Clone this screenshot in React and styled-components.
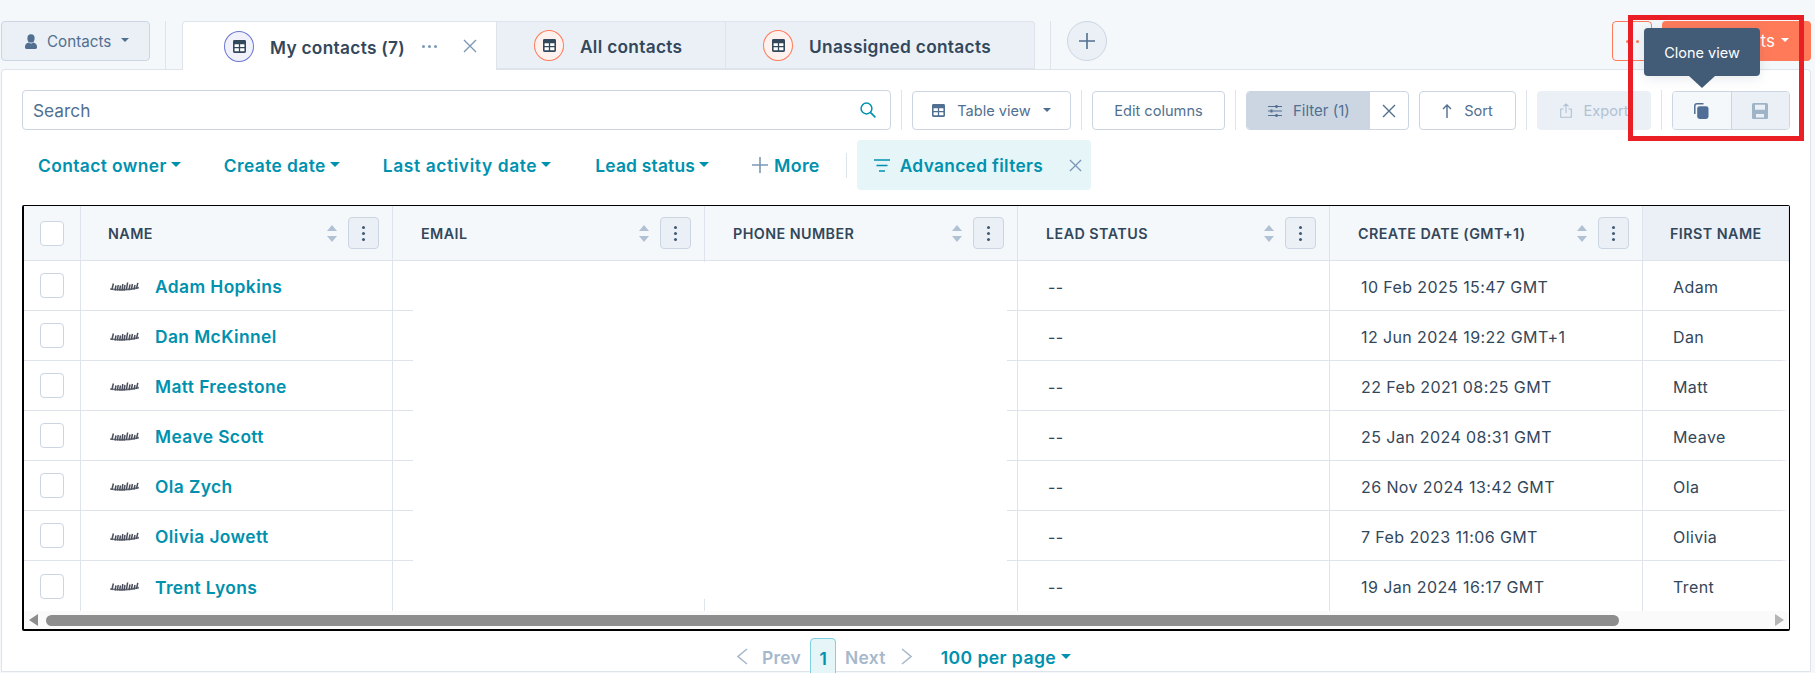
import React from 'react';
import styled, { createGlobalStyle } from 'styled-components';

const Global = createGlobalStyle`
  html, body { margin: 0; padding: 0; background: #f5f8fa; overflow: hidden; }
  body { font-family: Inter, "Noto Sans", "Liberation Sans", sans-serif; color: #33475b; }
  * { box-sizing: border-box; }
`;

const Page = styled.div`
  position: relative;
  width: 1815px;
  height: 673px;
  overflow: hidden;
  background: #f5f8fa;
`;

const TopBar = styled.div`
  display: flex;
  align-items: flex-start;
  height: 70px;
  padding: 21px 4px 0 1px;
`;

const ContactsButton = styled.div`
  display: flex;
  align-items: center;
  width: 149px;
  height: 40px;
  padding-left: 23px;
  gap: 10px;
  background: #eaf0f6;
  border: 1px solid #cbd6e2;
  border-radius: 4px;
  color: #516f90;
  font-size: 15.2px;
`;

const TallSep = styled.div`
  width: 1px;
  height: 49px;
  background: #dfe3eb;
  margin: 0 16px 0 15px;
`;

const Tab = styled.div`
  position: relative;
  z-index: 2;
  display: flex;
  align-items: center;
  height: ${p => (p.$active ? '49px' : '48px')};
  width: ${p => p.$w}px;
  padding-left: ${p => p.$pad}px;
  background: ${p => (p.$active ? '#fff' : '#eaf0f6')};
  border: 1px solid #dfe3eb;
  border-bottom: ${p => (p.$active ? 'none' : '1px solid #dfe3eb')};
  border-left-width: ${p => (p.$first ? '1px' : '0')};
  border-radius: ${p => p.$radius || '0'};
`;

const TabIconCircle = styled.span`
  flex: none;
  display: flex;
  align-items: center;
  justify-content: center;
  width: 30px;
  height: 31px;
  margin-top: 1px;
  border-radius: 50%;
  border: 1px solid ${p => (p.$active ? '#6a78d1' : '#ff7a59')};
  background: ${p => (p.$active ? '#f0f1fa' : '#fff1ee')};
`;

const TabLabel = styled.span`
  margin-left: 16px;
  font-size: 17.3px;
  font-weight: 600;
  letter-spacing: 0.3px;
  white-space: nowrap;
  margin-top: ${p => (p.$active ? '2px' : '3px')};
`;

const TabDots = styled.span`
  display: flex;
  gap: 3px;
  margin-left: ${p => p.$ml}px;
  span {
    width: 3px;
    height: 3px;
    border-radius: 50%;
    background: #7c98b6;
  }
`;

const TabClose = styled.span`
  display: flex;
  margin-left: 26px;
`;

const PlusCircle = styled.div`
  display: flex;
  align-items: center;
  justify-content: center;
  width: 40px;
  height: 40px;
  border-radius: 50%;
  background: #eaf0f6;
  border: 1px solid #cbd6e2;
`;

const Spacer = styled.div`
  flex: 1;
`;

const MoreButton = styled.div`
  display: flex;
  align-items: center;
  justify-content: center;
  gap: 7px;
  width: 40px;
  height: 40px;
  border: 1px solid #ff7a59;
  border-radius: 4px;
  span {
    width: 3px;
    height: 3px;
    border-radius: 50%;
    background: #ff7a59;
  }
`;

const CtaButton = styled.div`
  display: flex;
  align-items: center;
  justify-content: flex-end;
  gap: 6px;
  width: 149px;
  height: 40px;
  margin-left: 10px;
  padding-right: 22px;
  background: #ff7a59;
  border-radius: 4px;
  color: #fff;
  font-size: 17px;
  white-space: nowrap;
`;

const Panel = styled.div`
  position: relative;
  width: 1810px;
  height: 603px;
  margin: -1px 0 0 1px;
  background: #fff;
  border: 1px solid #dfe3eb;
  border-radius: 4px 4px 0 0;
  padding: 20px 0 0 20px;
`;

const Toolbar = styled.div`
  display: flex;
  align-items: flex-end;
  height: 40px;
`;

const SearchBox = styled.div`
  display: flex;
  align-items: center;
  justify-content: space-between;
  flex: none;
  width: 869px;
  height: 40px;
  padding: 0 14px 0 10px;
  border: 1px solid #cbd6e2;
  border-radius: 4px;
  color: #516f90;
  font-size: 17.3px;
  span { margin-top: 1px; }
`;

const Sep = styled.div`
  flex: none;
  width: 1px;
  height: 40px;
  margin: 0 10px;
  background: #dfe3eb;
`;

const ToolButton = styled.div`
  flex: none;
  display: flex;
  align-items: center;
  justify-content: center;
  gap: ${p => p.$gap || 12}px;
  width: ${p => p.$w}px;
  height: 39px;
  margin-left: ${p => p.$ml || 0}px;
  background: ${p => (p.$disabled ? '#eaf0f6' : '#fff')};
  border: 1px solid ${p => (p.$disabled ? '#eaf0f6' : '#cbd6e2')};
  border-radius: 4px;
  color: ${p => (p.$disabled ? '#b0c1d4' : '#516f90')};
  font-size: 14.6px;
  white-space: nowrap;
`;

const FilterGroup = styled.div`
  flex: none;
  display: flex;
  width: 163px;
  height: 39px;
  border: 1px solid #cbd6e2;
  border-radius: 4px;
  overflow: hidden;
`;

const FilterMain = styled.div`
  display: flex;
  align-items: center;
  gap: 11px;
  width: 123px;
  padding-left: 21px;
  background: #cbd6e2;
  color: #516f90;
  font-size: 15px;
`;

const FilterClear = styled.div`
  flex: 1;
  display: flex;
  align-items: center;
  justify-content: center;
`;

const ViewActions = styled.div`
  flex: none;
  display: flex;
  width: 118px;
  height: 39px;
  border: 1px solid #cbd6e2;
  border-radius: 4px;
  overflow: hidden;
`;

const ViewAction = styled.div`
  flex: 1;
  display: flex;
  align-items: center;
  justify-content: center;
  background: ${p => (p.$muted ? '#eaf0f6' : '#f5f8fa')};
  border-left: ${p => (p.$muted ? '1px solid #cbd6e2' : 'none')};
`;

const FilterRow = styled.div`
  display: flex;
  align-items: center;
  height: 50px;
  margin-top: 10px;
  padding-left: 16px;
`;

const FilterLink = styled.div`
  display: flex;
  align-items: center;
  gap: 4px;
  margin-right: ${p => p.$mr || 43}px;
  color: #0091ae;
  font-size: 17.4px;
  font-weight: 600;
  letter-spacing: ${p => p.$ls || 0.4}px;
  white-space: nowrap;
`;

const Caret = styled.span`
  display: inline-block;
  width: 0;
  height: 0;
  margin-top: -2px;
  border-left: ${p => p.$size || 5}px solid transparent;
  border-right: ${p => p.$size || 5}px solid transparent;
  border-top: ${p => p.$size || 5}px solid ${p => p.$color || '#0091ae'};
`;

const MoreLink = styled.div`
  display: flex;
  align-items: center;
  gap: 6px;
  color: #0091ae;
  font-size: 17.8px;
  font-weight: 600;
  letter-spacing: 0.3px;
`;

const ShortSep = styled.div`
  width: 1px;
  height: 25px;
  margin: 0 10px 0 26px;
  background: #dfe3eb;
`;

const AdvancedBox = styled.div`
  display: flex;
  align-items: center;
  width: 234px;
  height: 50px;
  padding-left: 17px;
  background: #e5f5f8;
  border-radius: 4px;
  color: #0091ae;
  font-size: 17.3px;
  font-weight: 600;
  letter-spacing: 0.35px;
  white-space: nowrap;
`;

const AdvancedLabel = styled.span`
  margin: 0 26px 0 10px;
`;

const TableFrame = styled.div`
  position: relative;
  width: 1768px;
  height: 426px;
  margin-top: 15px;
  border-style: solid;
  border-color: #000;
  border-width: 1px 1px 2px 2px;
  border-radius: 2px;
  overflow: hidden;
  background: #fff;
`;

const gridCols = '57px 312px 312px 313px 312px 313px 1fr';

const HeaderRow = styled.div`
  display: grid;
  grid-template-columns: 58px 312px 312px 313px 312px 313px 1fr;
  height: 55px;
  margin-left: -1px;
  background: #f5f8fa;
  border-bottom: 1px solid #dfe3eb;
`;

const HeaderCell = styled.div`
  display: flex;
  align-items: center;
  padding: 0 13px 0 ${p => p.$pl || 28}px;
  background: ${p => (p.$sorted ? '#eaf0f6' : 'transparent')};
  border-right: 1px solid #dfe3eb;
  font-size: 14.3px;
  font-weight: 600;
  letter-spacing: 0.45px;
  white-space: nowrap;
`;

const HeaderLabel = styled.span`
  flex: 1;
`;

const SortArrows = styled.span`
  display: flex;
  flex-direction: column;
  gap: 5px;
  margin-right: 11px;
`;

const KebabButton = styled.span`
  display: flex;
  flex-direction: column;
  align-items: center;
  justify-content: center;
  gap: 3px;
  width: 31px;
  height: 32px;
  background: #eaf0f6;
  border: 1px solid #cbd6e2;
  border-radius: 4px;
  i {
    width: 3px;
    height: 3px;
    border-radius: 50%;
    background: #425b76;
  }
`;

const BodyRow = styled.div`
  display: grid;
  grid-template-columns: ${gridCols};
  height: 50px;
  border-bottom: ${p => (p.$last ? 'none' : '1px solid #dfe3eb')};
`;

const CheckCell = styled.div`
  display: flex;
  align-items: center;
  justify-content: center;
  border-right: 1px solid #dfe3eb;
`;

const Checkbox = styled.span`
  width: 24px;
  height: 25px;
  background: #fff;
  border: 1px solid #cbd6e2;
  border-radius: 4px;
`;

const BodyCell = styled.div`
  display: flex;
  align-items: center;
  padding: 2px 0 0 ${p => p.$pl || 27}px;
  border-right: 1px solid #dfe3eb;
  font-size: 16px;
  letter-spacing: 0.4px;
  white-space: nowrap;
`;

const NameLink = styled.span`
  margin-left: 16px;
  color: #0091ae;
  font-size: 17.4px;
  font-weight: 600;
  letter-spacing: 0.4px;
`;

const Redaction = styled.div`
  position: absolute;
  left: 389px;
  top: 56px;
  width: 594px;
  height: 337px;
  background: #fff;
`;

const EdgeFade = styled.div`
  position: absolute;
  right: 0;
  top: 56px;
  width: 8px;
  height: 350px;
  background: linear-gradient(to right, rgba(255, 255, 255, 0), #fff);
`;

const ScrollTrack = styled.div`
  display: flex;
  align-items: center;
  height: 18px;
  padding: 0 5px;
  background: #fafafa;
`;

const ScrollArrow = styled.span`
  flex: none;
  width: 0;
  height: 0;
  border-top: 6px solid transparent;
  border-bottom: 6px solid transparent;
  ${p => (p.$right ? 'border-left: 9px solid #b5b5b5;' : 'border-right: 9px solid #8d8d8d;')}
`;

const ScrollThumb = styled.span`
  width: 1573px;
  height: 11px;
  margin-left: 8px;
  border-radius: 6px;
  background: #8d8d8d;
`;

const ScrollRest = styled.span`
  flex: 1;
`;

const Pagination = styled.div`
  display: flex;
  align-items: flex-start;
  margin-top: 7px;
  height: 40px;
  padding-left: 715px;
  font-size: 17.4px;
  font-weight: 600;
`;

const PageLabel = styled.span`
  margin: ${p => (p.$next ? '9px 15px 0 9px' : '9px 9px 0 14px')};
  color: #a6b8cc;
  letter-spacing: 0.3px;
`;

const PageChevron = styled.span`
  display: flex;
  margin-top: 10px;
`;

const PageNumber = styled.span`
  display: flex;
  justify-content: center;
  width: 26px;
  height: 40px;
  padding-top: 9px;
  background: #e5f5f8;
  border: 1px solid #7fd1de;
  border-radius: 4px;
  color: #0091ae;
`;

const PerPage = styled.span`
  display: flex;
  align-items: center;
  gap: 5px;
  margin: 9px 0 0 29px;
  color: #0091ae;
  font-size: 17.6px;
  letter-spacing: 0.4px;
`;

const Tooltip = styled.div`
  position: absolute;
  z-index: 6;
  left: 1644px;
  top: 28px;
  display: flex;
  align-items: center;
  justify-content: center;
  width: 116px;
  height: 48px;
  background: #425b76;
  border-radius: 4px;
  color: #fff;
  font-size: 14.5px;
  box-shadow: 0 2px 12px rgba(66, 91, 118, 0.15);
  &::after {
    content: '';
    position: absolute;
    left: 45px;
    bottom: -12px;
    width: 0;
    height: 0;
    border-left: 13px solid transparent;
    border-right: 13px solid transparent;
    border-top: 12px solid #425b76;
  }
`;

const RedBox = styled.div`
  position: absolute;
  z-index: 5;
  left: 1628px;
  top: 15px;
  width: 176px;
  height: 126px;
  border: 5px solid #ea1f25;
  pointer-events: none;
`;

const TableIcon = ({ size = 13, color = '#33475b' }) => (
  <svg width={size} height={size} viewBox="0 0 14 14" aria-hidden="true">
    <path fill={color} d="M1.5 0h11A1.5 1.5 0 0 1 14 1.5v11a1.5 1.5 0 0 1-1.5 1.5h-11A1.5 1.5 0 0 1 0 12.5v-11A1.5 1.5 0 0 1 1.5 0z" />
    <path fill="#fff" d="M1.7 4.6h4.6v3H1.7zM7.7 4.6h4.6v3H7.7zM1.7 9h4.6v3.2H1.7zM7.7 9h4.6v3.2H7.7z" />
  </svg>
);

const CloseIcon = ({ size = 14, color = '#7c98b6', width = 1.4 }) => (
  <svg width={size} height={size} viewBox="0 0 14 14" aria-hidden="true">
    <path d="M1 1l12 12M13 1L1 13" stroke={color} strokeWidth={width} fill="none" />
  </svg>
);

const PersonIcon = () => (
  <svg width="12" height="15" viewBox="0 0 12 15" aria-hidden="true">
    <ellipse cx="6" cy="4.4" rx="3.6" ry="4.2" fill="#516f90" />
    <path fill="#516f90" d="M0 12.6c0-2.4 2-3.6 3.6-4 .8.6 1.6.9 2.4.9s1.6-.3 2.4-.9c1.6.4 3.6 1.6 3.6 4v1c0 .8-.6 1.4-1.4 1.4H1.4C.6 15 0 14.4 0 13.6z" />
  </svg>
);

const PlusIcon = ({ size = 16, color = '#516f90', width = 1.6 }) => (
  <svg width={size} height={size} viewBox="0 0 16 16" aria-hidden="true">
    <path d="M8 0v16M0 8h16" stroke={color} strokeWidth={width} fill="none" />
  </svg>
);

const SearchIcon = () => (
  <svg width="16" height="16" viewBox="0 0 16 16" aria-hidden="true">
    <circle cx="6.5" cy="6.5" r="5.4" stroke="#0091ae" strokeWidth="1.5" fill="none" />
    <path d="M10.4 10.4l5 5" stroke="#0091ae" strokeWidth="1.6" fill="none" />
  </svg>
);

const SlidersIcon = () => (
  <svg width="14" height="14" viewBox="0 0 14 14" aria-hidden="true">
    <path d="M0 2.5h14M0 7h14M0 11.5h14" stroke="#516f90" strokeWidth="1.2" fill="none" />
    <path d="M8.5 1v3M3.5 5.5v3M8.5 10v3" stroke="#516f90" strokeWidth="2" fill="none" />
  </svg>
);

const ArrowUpIcon = () => (
  <svg width="10" height="14" viewBox="0 0 10 14" aria-hidden="true">
    <path d="M5 14V1M1 5l4-4 4 4" stroke="#516f90" strokeWidth="1.4" fill="none" />
  </svg>
);

const ExportIcon = () => (
  <svg width="12" height="15" viewBox="0 0 12 15" aria-hidden="true">
    <path d="M6 10V1M3.4 3.4L6 1l2.6 2.4M3.6 6H.7v8.3h10.6V6H8.4" stroke="#b0c1d4" strokeWidth="1.1" fill="none" />
  </svg>
);

const CloneIcon = () => (
  <svg width="15" height="16" viewBox="0 0 15 16" aria-hidden="true">
    <path d="M.8 11V3A2.2 2.2 0 0 1 3 .8h6.5" stroke="#516f90" strokeWidth="1.5" fill="none" />
    <rect x="3.2" y="3.2" width="11.3" height="12.8" rx="2.4" fill="#4f6f97" />
  </svg>
);

const SaveIcon = () => (
  <svg width="16" height="16" viewBox="0 0 16 16" aria-hidden="true">
    <path fill="#a0b4c8" d="M1.5 0h13A1.5 1.5 0 0 1 16 1.5v13a1.5 1.5 0 0 1-1.5 1.5h-13A1.5 1.5 0 0 1 0 14.5v-13A1.5 1.5 0 0 1 1.5 0z" />
    <path fill="#eaf0f6" d="M3 1.8h10v5H3zM4 11h8v3.4H4z" />
  </svg>
);

const FilterLinesIcon = () => (
  <svg width="16" height="13" viewBox="0 0 16 13" aria-hidden="true">
    <path d="M0 1h16M2.5 6.5h11M5 12h6" stroke="#0091ae" strokeWidth="1.5" fill="none" />
  </svg>
);

const Chevron = ({ right }) => (
  <svg width="11" height="17" viewBox="0 0 11 17" aria-hidden="true">
    <path d={right ? 'M1 1l9 7.5-9 7.5' : 'M10 1L1 8.5l9 7.5'} stroke="#a6b8cc" strokeWidth="1.5" fill="none" />
  </svg>
);

const SortGlyph = ({ down }) => (
  <svg width="10" height="6" viewBox="0 0 10 6" aria-hidden="true" style={{ display: 'block' }}>
    <path d={down ? 'M0 0h10L5 6z' : 'M5 0l5 6H0z'} fill="#b0c1d4" />
  </svg>
);

const CompanyLogo = () => (
  <svg width="29" height="10" viewBox="0 0 29 10" aria-hidden="true">
    <path d="M0 7c9 1.4 19 1 29-1.4" stroke="#6f7480" strokeWidth="1.6" fill="none" />
    <path d="M3.4 1.5L1.8 8M6 3.5L5 8.5M8.2 3L7.4 8.5M10.5 3.5L9.6 8.5M12.8 2L12 8.5M15 3L14 8.5M17.6 .5L16.4 8M20 2.5L19 8M22.4 2L21.4 7.5M25 3L24 7.5M27.8 .8L26.4 7" stroke="#4a4f5b" strokeWidth="1.5" fill="none" />
  </svg>
);

const columns = [
  { label: 'NAME', pl: 27 },
  { label: 'EMAIL', pl: 28 },
  { label: 'PHONE NUMBER', pl: 28 },
  { label: 'LEAD STATUS', pl: 28 },
  { label: 'CREATE DATE (GMT+1)', pl: 28 },
];

const contacts = [
  ['Adam Hopkins', '10 Feb 2025 15:47 GMT', 'Adam'],
  ['Dan McKinnel', '12 Jun 2024 19:22 GMT+1', 'Dan'],
  ['Matt Freestone', '22 Feb 2021 08:25 GMT', 'Matt'],
  ['Meave Scott', '25 Jan 2024 08:31 GMT', 'Meave'],
  ['Ola Zych', '26 Nov 2024 13:42 GMT', 'Ola'],
  ['Olivia Jowett', '7 Feb 2023 11:06 GMT', 'Olivia'],
  ['Trent Lyons', '19 Jan 2024 16:17 GMT', 'Trent'],
];

export default function App() {
  return (
    <Page>
      <Global />
      <TopBar>
        <ContactsButton>
          <PersonIcon />
          <span>Contacts</span>
          <Caret $color="#516f90" $size={4} />
        </ContactsButton>
        <TallSep />
        <Tab $active $first $w={315} $pad={41} $radius="4px 0 0 0">
          <TabIconCircle $active><TableIcon /></TabIconCircle>
          <TabLabel $active>My contacts (7)</TabLabel>
          <TabDots $ml={17}><span /><span /><span /></TabDots>
          <TabClose><CloseIcon /></TabClose>
        </Tab>
        <Tab $w={229} $pad={37}>
          <TabIconCircle><TableIcon /></TabIconCircle>
          <TabLabel>All contacts</TabLabel>
        </Tab>
        <Tab $w={309} $pad={37} $radius="0 4px 0 0">
          <TabIconCircle><TableIcon /></TabIconCircle>
          <TabLabel>Unassigned contacts</TabLabel>
        </Tab>
        <TallSep />
        <PlusCircle><PlusIcon /></PlusCircle>
        <Spacer />
        <MoreButton><span /><span /></MoreButton>
        <CtaButton>Add contacts <Caret $color="#fff" $size={4} /></CtaButton>
      </TopBar>

      <Panel>
        <Toolbar>
          <SearchBox>
            <span>Search</span>
            <SearchIcon />
          </SearchBox>
          <Sep />
          <ToolButton $w={159}><TableIcon size={13} color="#516f90" /><span>Table view</span><Caret $color="#516f90" $size={4} /></ToolButton>
          <Sep />
          <ToolButton $w={133}>Edit columns</ToolButton>
          <Sep />
          <FilterGroup>
            <FilterMain><SlidersIcon /><span>Filter (1)</span></FilterMain>
            <FilterClear><CloseIcon size={14} color="#516f90" /></FilterClear>
          </FilterGroup>
          <ToolButton $w={97} $ml={10}><ArrowUpIcon /><span>Sort</span></ToolButton>
          <Sep />
          <ToolButton $w={114} $disabled $gap={12}><ExportIcon /><span>Export</span></ToolButton>
          <Sep />
          <ViewActions>
            <ViewAction><CloneIcon /></ViewAction>
            <ViewAction $muted><SaveIcon /></ViewAction>
          </ViewActions>
        </Toolbar>

        <FilterRow>
          <FilterLink>Contact owner <Caret /></FilterLink>
          <FilterLink>Create date <Caret /></FilterLink>
          <FilterLink $ls={0.6} $mr={44}>Last activity date <Caret /></FilterLink>
          <FilterLink $ls={0.2}>Lead status <Caret /></FilterLink>
          <MoreLink><PlusIcon color="#7c98b6" /><span>More</span></MoreLink>
          <ShortSep />
          <AdvancedBox>
            <FilterLinesIcon />
            <AdvancedLabel>Advanced filters</AdvancedLabel>
            <CloseIcon size={13} />
          </AdvancedBox>
        </FilterRow>

        <TableFrame>
          <HeaderRow>
            <CheckCell><Checkbox /></CheckCell>
            {columns.map(c => (
              <HeaderCell key={c.label} $pl={c.pl}>
                <HeaderLabel>{c.label}</HeaderLabel>
                <SortArrows><SortGlyph /><SortGlyph down /></SortArrows>
                <KebabButton><i /><i /><i /></KebabButton>
              </HeaderCell>
            ))}
            <HeaderCell $sorted $pl={27}>FIRST NAME</HeaderCell>
          </HeaderRow>
          {contacts.map((c, i) => (
            <BodyRow key={c[0]} $last={i === contacts.length - 1}>
              <CheckCell><Checkbox /></CheckCell>
              <BodyCell $pl={29}>
                <CompanyLogo />
                <NameLink>{c[0]}</NameLink>
              </BodyCell>
              <BodyCell />
              <BodyCell />
              <BodyCell $pl={30}>--</BodyCell>
              <BodyCell $pl={31}>{c[1]}</BodyCell>
              <BodyCell $pl={30}>{c[2]}</BodyCell>
            </BodyRow>
          ))}
          <Redaction />
          <EdgeFade />
          <ScrollTrack>
            <ScrollArrow />
            <ScrollThumb />
            <ScrollRest />
            <ScrollArrow $right />
          </ScrollTrack>
        </TableFrame>

        <Pagination>
          <PageChevron><Chevron /></PageChevron>
          <PageLabel>Prev</PageLabel>
          <PageNumber>1</PageNumber>
          <PageLabel $next>Next</PageLabel>
          <PageChevron><Chevron right /></PageChevron>
          <PerPage>100 per page <Caret /></PerPage>
        </Pagination>
      </Panel>

      <RedBox />
      <Tooltip>Clone view</Tooltip>
    </Page>
  );
}
